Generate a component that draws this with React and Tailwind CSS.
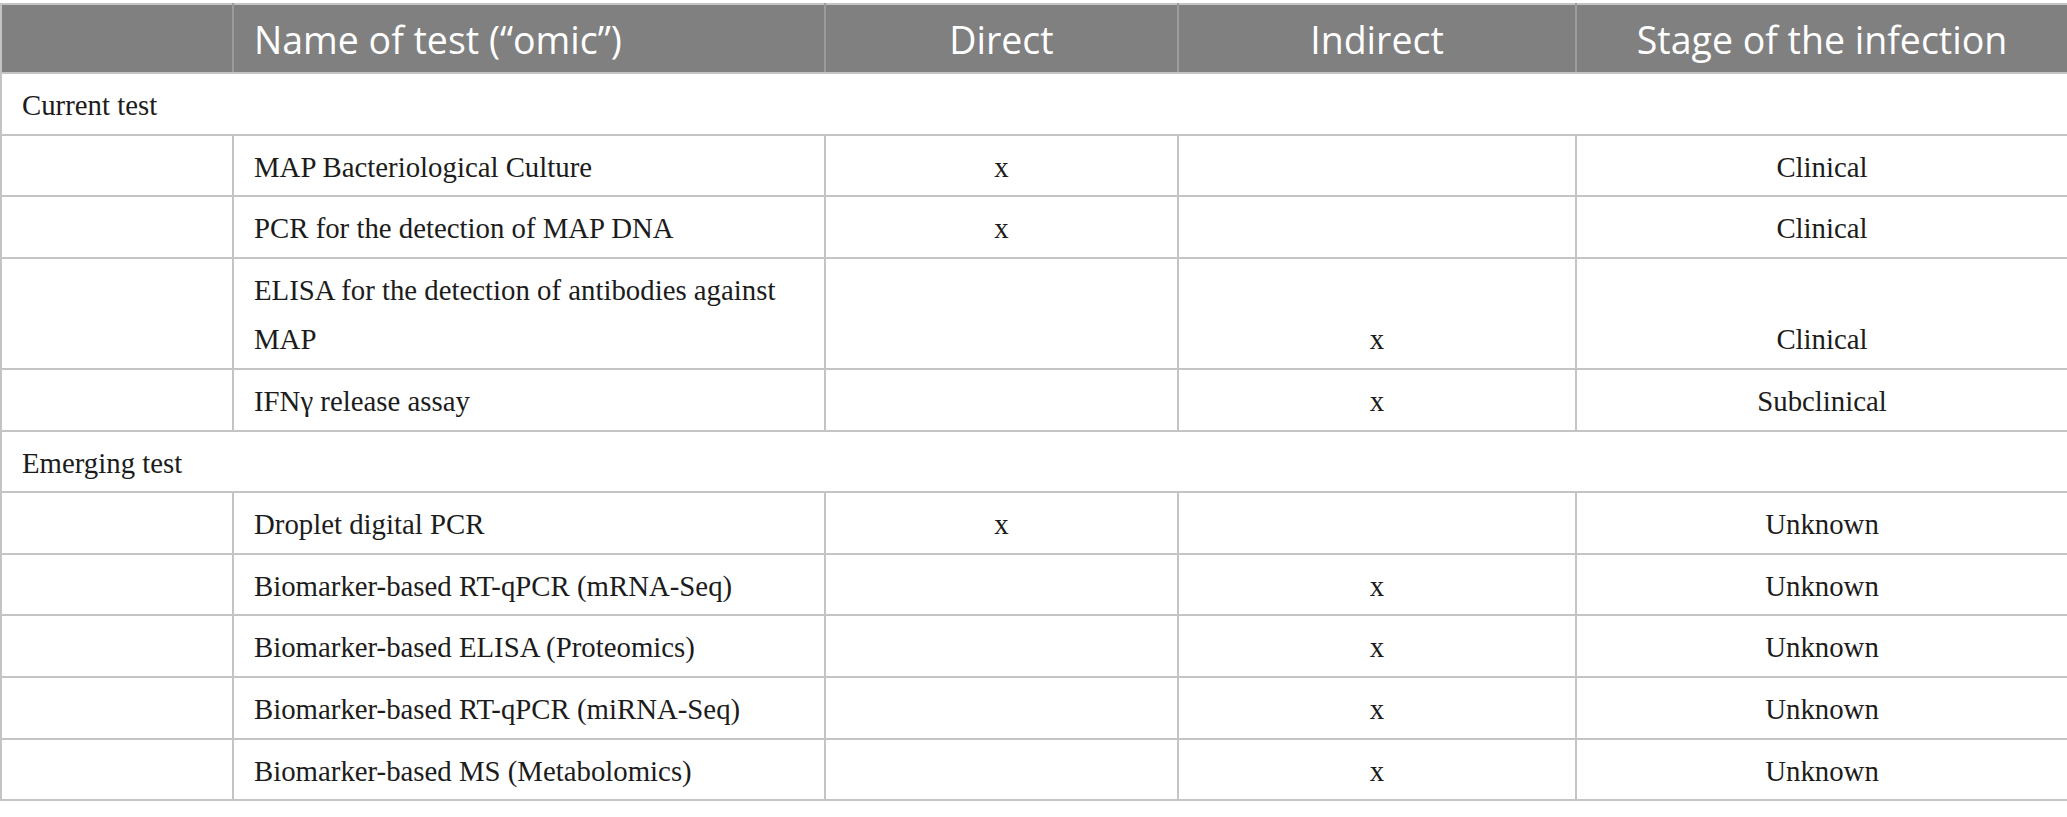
import React from "react";

const sections = [
  {
    title: "Current test",
    rows: [
      ["MAP Bacteriological Culture", "x", "", "Clinical"],
      ["PCR for the detection of MAP DNA", "x", "", "Clinical"],
      ["ELISA for the detection of antibodies against MAP", "", "x", "Clinical"],
      ["IFNγ release assay", "", "x", "Subclinical"],
    ],
  },
  {
    title: "Emerging test",
    rows: [
      ["Droplet digital PCR", "x", "", "Unknown"],
      ["Biomarker-based RT-qPCR (mRNA-Seq)", "", "x", "Unknown"],
      ["Biomarker-based ELISA (Proteomics)", "", "x", "Unknown"],
      ["Biomarker-based RT-qPCR (miRNA-Seq)", "", "x", "Unknown"],
      ["Biomarker-based MS (Metabolomics)", "", "x", "Unknown"],
    ],
  },
];

const td =
  "border-2 border-[#c4c4c4] pt-[7px] pb-[3px] px-[20px] leading-[49.6px] align-bottom";

export default function App() {
  return (
    <div className="bg-white w-[2067px] h-[817px] pt-[3px]">
      <table
        className="w-[2067px] table-fixed border-collapse text-[#1c1c1c] text-[28.8px]"
        style={{ fontFamily: '"Liberation Serif", "Times New Roman", serif' }}
      >
        <colgroup>
          <col className="w-[232px]" />
          <col className="w-[592px]" />
          <col className="w-[353px]" />
          <col className="w-[398px]" />
          <col className="w-[492px]" />
        </colgroup>
        <thead>
          <tr
            className="bg-[#808080] text-white text-[37.5px] font-normal"
            style={{ fontFamily: '"Open Sans", "Noto Sans", sans-serif' }}
          >
            <th className="border-2 border-t-[#c4c4c4] border-x-[#9c9c9c] border-b-[#c4c4c4] border-l-[#c4c4c4] pt-[9px] pb-[7px] leading-[51px] font-normal"></th>
            <th className="border-2 border-t-[#c4c4c4] border-x-[#9c9c9c] border-b-[#c4c4c4] pt-[9px] pb-[7px] px-[20px] leading-[51px] font-normal text-left">
              Name of test (“omic”)
            </th>
            <th className="border-2 border-t-[#c4c4c4] border-x-[#9c9c9c] border-b-[#c4c4c4] pt-[9px] pb-[7px] leading-[51px] font-normal text-center">
              Direct
            </th>
            <th className="border-2 border-t-[#c4c4c4] border-x-[#9c9c9c] border-b-[#c4c4c4] pt-[9px] pb-[7px] leading-[51px] font-normal text-center">
              Indirect
            </th>
            <th className="border-2 border-t-[#c4c4c4] border-x-[#9c9c9c] border-b-[#c4c4c4] border-r-[#c4c4c4] pt-[9px] pb-[7px] leading-[51px] font-normal text-center">
              Stage of the infection
            </th>
          </tr>
        </thead>
        <tbody>
          {sections.map((s) => (
            <React.Fragment key={s.title}>
              <tr>
                <td colSpan={5} className={td + " text-left"}>
                  {s.title}
                </td>
              </tr>
              {s.rows.map((r) => (
                <tr key={r[0]}>
                  <td className={td}></td>
                  <td className={td + " text-left"}>{r[0]}</td>
                  <td className={td + " text-center"}>{r[1]}</td>
                  <td className={td + " text-center"}>{r[2]}</td>
                  <td className={td + " text-center"}>{r[3]}</td>
                </tr>
              ))}
            </React.Fragment>
          ))}
        </tbody>
      </table>
    </div>
  );
}
